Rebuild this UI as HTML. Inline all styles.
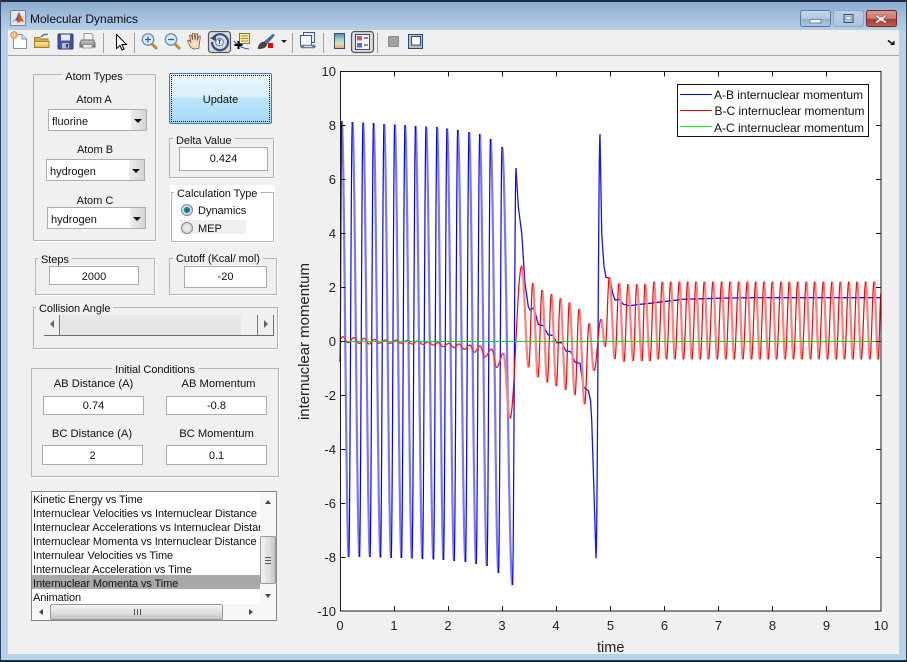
<!DOCTYPE html>
<html><head><meta charset="utf-8"><style>
html,body{margin:0;padding:0;background:#fff}
#w{position:relative;width:907px;height:662px;overflow:hidden;background:linear-gradient(#87a8cc 0,#a6c1de 18px,#b9d1ea 34px,#b9d1ea 100%);font:11px/14px "Liberation Sans",sans-serif;color:#111}
#w div{position:absolute;box-sizing:border-box}
.p{border:1px solid #b4b4b4;box-shadow:1px 1px 0 #fff}
.t{background:#f0f0f0;padding:0 3px;white-space:nowrap;line-height:14px;margin-top:1px;letter-spacing:-.05px}
.c{white-space:nowrap;line-height:14px;transform:translateX(-50%);margin-top:1px}
.i{background:#fff;border:1px solid #ababab;text-align:center;white-space:nowrap}
.s{background:#fff;border:1px solid #acacac;padding-left:3px;white-space:nowrap;line-height:25px}
.s i{position:absolute;right:0;top:0;bottom:0;width:15px;background:linear-gradient(90deg,#ececec,#d4d4d4)}
.s i:after{content:"";position:absolute;left:3px;top:9px;border:4px solid transparent;border-top:4px solid #111;border-bottom:0}
.li{left:1px;width:227px;height:14px;line-height:14px;white-space:nowrap;overflow:hidden;letter-spacing:-.1px}
</style></head><body><div id="w">
<div style="left:0;top:0;width:907px;height:2px;background:#1c2f45"></div>
<div style="left:0;top:0;width:1px;height:662px;background:#2c4460"></div>
<div style="left:906px;top:0;width:1px;height:662px;background:#2c4460"></div>
<div style="left:0;top:660px;width:907px;height:2px;background:#10303c"></div>
<div style="left:8px;top:30px;width:891px;height:25px;background:#efefef"></div>
<div style="left:8px;top:55px;width:891px;height:1px;background:#a5a5a5"></div>
<div style="left:8px;top:56px;width:891px;height:598px;background:#f0f0f0"></div>

<!-- title bar -->
<svg style="position:absolute;left:0;top:0" width="907" height="56" viewBox="0 0 907 56">
<defs>
<linearGradient id="b1" x1="0" y1="0" x2="0" y2="1"><stop offset="0" stop-color="#c8d9ec"/><stop offset=".5" stop-color="#b0c7e0"/><stop offset=".55" stop-color="#93b1d1"/><stop offset="1" stop-color="#adc9e4"/></linearGradient>
<linearGradient id="b3" x1="0" y1="0" x2="0" y2="1"><stop offset="0" stop-color="#bcd0e6"/><stop offset="1" stop-color="#aac5e1"/></linearGradient>
<linearGradient id="b2" x1="0" y1="0" x2="0" y2="1"><stop offset="0" stop-color="#d9988a"/><stop offset=".5" stop-color="#c87c6f"/><stop offset=".55" stop-color="#ad3a2c"/><stop offset="1" stop-color="#c2604e"/></linearGradient>
<linearGradient id="cb" x1="0" y1="0" x2="0" y2="1"><stop offset="0" stop-color="#5a78c8"/><stop offset=".35" stop-color="#8fd0c8"/><stop offset=".65" stop-color="#e8e0a0"/><stop offset="1" stop-color="#e8a090"/></linearGradient>
<linearGradient id="fd" x1="0" y1="0" x2="0" y2="1"><stop offset="0" stop-color="#fdf0b0"/><stop offset="1" stop-color="#e8b840"/></linearGradient>
<linearGradient id="pr" x1="0" y1="0" x2="0" y2="1"><stop offset="0" stop-color="#d0d0d0"/><stop offset="1" stop-color="#7a7a7a"/></linearGradient>
</defs>
<rect x="10.500" y="10.500" width="15" height="15" fill="#dfe6ee" stroke="#7a8796"/>
<path d="M12 22l4-3 3-7 2 4 3 6-3-1-3 2-2-3z" fill="#e0561a"/><path d="M12 22l4-3 3-7-1 8-2 0z" fill="#35679f"/>
<rect x="800.500" y="10.500" width="30" height="16" rx="2" fill="url(#b1)" stroke="#5d7a9d"/>
<rect x="810" y="19.500" width="11" height="3.500" fill="#f4f4f4" stroke="#5a6a7d" stroke-width=".7"/>
<rect x="833.500" y="10.500" width="30" height="16" rx="2" fill="url(#b3)" stroke="#8aa6c4"/>
<rect x="844" y="14.500" width="9" height="8" fill="none" stroke="#3e4c5d" stroke-width="1"/><rect x="846" y="16.500" width="5" height="3" fill="#eee" stroke="#777" stroke-width=".5"/>
<rect x="866.500" y="10.500" width="30" height="16" rx="2" fill="url(#b2)" stroke="#6d2b2d"/>
<path d="M877 14.500l3 2.500 2 0 3-2.500 2 1.500-3.500 3 3.500 3-2 1.500-3-2.500-2 0-3 2.500-2-1.500 3.500-3-3.500-3z" fill="#f2f2f2" stroke="#7d4040" stroke-width=".6"/>
<!-- toolbar -->
<path d="M13.500 34.500h8.500l4.500 4.500v9.500h-13z" fill="#fbfdff" stroke="#7f93a8"/><path d="M22 34.500v4.500h4.500" fill="#dfe8f0" stroke="#7f93a8"/><circle cx="14" cy="35" r="3.200" fill="#f9c8a0" stroke="#ec7a3a" stroke-width="1"/>
<path d="M34.500 47.500v-10h5l1.500 1.500h7v8.500z" fill="#d9b040" stroke="#a0822c"/><path d="M34.500 47.500v-6h14.500v6z" fill="url(#fd)" stroke="#a0822c"/><path d="M41 37q3-3.500 7-2.500" fill="none" stroke="#4a7298" stroke-width="1.400"/>
<rect x="58" y="34" width="15" height="15" rx="1" fill="#4451a6" stroke="#2f3778"/><rect x="61" y="34.500" width="9" height="6" fill="#e8ecf5"/><rect x="62" y="43" width="7" height="5.500" fill="#b8bcc8"/><rect x="66" y="44" width="2" height="3.500" fill="#333a70"/>
<path d="M84 40v-6.500h7l2 2v4.500z" fill="#f2f2f2" stroke="#9a9a9a"/><path d="M81.500 40h12l1.500 3v4h-15v-4z" fill="url(#pr)" stroke="#666"/><rect x="83" y="44.500" width="9" height="3.500" fill="#eaeaea" stroke="#777" stroke-width=".6"/>
<path d="M103.500 33v20M134.500 33v20M292.500 33v20M323.500 33v20M377.500 33v20" stroke="#a0a0a0"/>
<path d="M116.500 34.500v14l3.500-3 2 4.500 2-1-2-4.500h4.500z" fill="#fff" stroke="#000"/>
<path d="M152 44l5 5" stroke="#c98a30" stroke-width="3"/><circle cx="148" cy="39.500" r="5.700" fill="#d8ecf8" stroke="#6f93b4" stroke-width="1.400"/><path d="M145 39.500h6M148 36.500v6" stroke="#2c5fa0" stroke-width="1.300"/>
<path d="M175 44l5 5" stroke="#c98a30" stroke-width="3"/><circle cx="171" cy="39.500" r="5.700" fill="#d8ecf8" stroke="#6f93b4" stroke-width="1.400"/><path d="M168 39.500h6" stroke="#2c5fa0" stroke-width="1.300"/>
<path d="M195 49c-3 0-5-2-6-5l-1.500-3.500 1.500-.5 2 2.500-1.500-7 1.700-.5 1.700 5-.5-6.500 1.800-.2 1 6.500.7-6 1.700.2-.4 6.500 1.700-4.500 1.500.5-1 7-.7 5z" fill="#f8dcc0" stroke="#77583f" stroke-width=".8"/>
<rect x="208.500" y="31.500" width="22" height="21" rx="3" fill="#dadada" stroke="#555" stroke-width="1.200"/>
<path d="M213.500 37.500a8 8 0 1 1-1.500 4.500" fill="none" stroke="#324f82" stroke-width="2.200"/><path d="M210 38l6-2.500 0 6z" fill="#324f82"/><circle cx="219.500" cy="42" r="3.800" fill="#e8edf5" stroke="#5d7aa8" stroke-width="1"/><path d="M218 40h3M219.500 40v4" stroke="#324f82"/>
<rect x="239.500" y="33.500" width="10" height="10" fill="#f4e8a0" stroke="#8a7a30"/><path d="M241 36h7M241 38.500h7M241 41h7" stroke="#8a7a50" stroke-width=".7"/>
<path d="M234 41q5 7 15 8" fill="none" stroke="#2a3ad0"/><path d="M238.500 41v8M234.500 45h8" stroke="#000" stroke-width="2"/>
<path d="M264 42l9-8 1.500 1.500-8 9z" fill="#4d6fa8" stroke="#26406a" stroke-width=".5"/><path d="M258 48.500c.5-3.500 2.500-6.500 6-6.500l2.500 2.500c0 3-4 4.500-8.500 4z" fill="#444" stroke="#222" stroke-width=".5"/><rect x="268" y="43" width="5" height="5" fill="#e00"/>
<path d="M281 40h6l-3 3z" fill="#222"/>
<rect x="303.500" y="32.500" width="11" height="10" fill="#e8eef5" stroke="#3e5a7c"/><rect x="300.500" y="35.500" width="11" height="10" fill="#f4f7fb" stroke="#3e5a7c"/><path d="M302 46.500h5M309 46.500h5" stroke="#6e7f96" stroke-width="3.400" stroke-linecap="round"/><path d="M304 46.500h8" stroke="#e4e8f0" stroke-width="1"/>
<rect x="334.500" y="33.500" width="10" height="15" fill="url(#cb)" stroke="#35507e"/>
<rect x="351.500" y="31.500" width="22" height="21" rx="3" fill="#dadada" stroke="#555" stroke-width="1.200"/><rect x="355.500" y="34.500" width="14" height="15" fill="#f8f8fc" stroke="#35507e"/><rect x="357" y="36" width="5" height="4.500" fill="#e05560"/><rect x="357" y="43" width="5" height="4.500" fill="#5a6ad8"/><path d="M364 38h4M364 45h4" stroke="#222"/>
<rect x="388.500" y="36.500" width="10" height="10" rx="1" fill="#a2a2a2" stroke="#8c8c8c"/>
<rect x="408.500" y="34.500" width="14" height="14" fill="#b4c0d0" stroke="#2c4a78"/><rect x="411.500" y="36.500" width="9" height="8.500" fill="#fff" stroke="#2c4a78"/>
<path d="M888 40.500l3.500 2.500" stroke="#000" stroke-width="1.500"/><path d="M890 45h4.500v-4.500z" fill="#000"/>
</svg>
<div style="left:30px;top:12px;font-size:12px;color:#0c0c14;white-space:nowrap">Molecular Dynamics</div>

<!-- Atom types -->
<div class="p" style="left:33px;top:74px;width:123px;height:167px"></div>
<div class="c t" style="left:94px;top:69px">Atom Types</div>
<div class="c" style="left:94px;top:92px">Atom A</div>
<div class="s" style="left:48px;top:109px;width:99px;height:22px">fluorine<i></i></div>
<div class="c" style="left:95px;top:142px">Atom B</div>
<div class="s" style="left:46px;top:159px;width:99px;height:22px">hydrogen<i></i></div>
<div class="c" style="left:95px;top:193px">Atom C</div>
<div class="s" style="left:47px;top:207px;width:99px;height:22px">hydrogen<i></i></div>

<!-- Update -->
<div style="left:169px;top:73px;width:103px;height:51px;border:1px solid #3c7fb1;border-radius:2px;background:linear-gradient(#eaf6fd 0,#d9f0fc 47%,#bee6fd 48%,#a7d9f5 100%)"></div>
<div style="left:171px;top:75px;width:99px;height:47px;border:1px dotted #000;text-align:center;line-height:49px">Update</div>

<!-- Delta -->
<div class="p" style="left:169px;top:138px;width:105px;height:40px"></div>
<div class="t" style="left:173px;top:133px">Delta Value</div>
<div class="i" style="left:179px;top:147px;width:89px;height:24px;line-height:22px">0.424</div>

<!-- Calc type -->
<div style="left:170px;top:185px;width:105px;height:58px;background:#fff"></div>
<div class="p" style="left:171px;top:192px;width:103px;height:50px;box-shadow:none"></div>
<div class="t" style="left:174px;top:186px;background:#fff">Calculation Type</div>
<div style="left:180px;top:220px;width:66px;height:14px;background:#f0f0f0"></div>
<div style="left:181px;top:204px;width:12px;height:12px;border-radius:50%;border:1px solid #7a8a9a;background:radial-gradient(circle,#0b5f94 0,#2a86b8 40%,#dfe4e9 48%,#b8bcc2 100%)"></div>
<div style="left:181px;top:222px;width:12px;height:12px;border-radius:50%;border:1px solid #8a8a8a;background:radial-gradient(circle,#f4f4f4 0,#dcdcdc 60%,#c4c4c4 100%)"></div>
<div style="left:198px;top:204px;white-space:nowrap">Dynamics</div>
<div style="left:198px;top:222px">MEP</div>

<!-- Steps / cutoff -->
<div class="p" style="left:35px;top:258px;width:120px;height:37px"></div>
<div class="t" style="left:38px;top:252px">Steps</div>
<div class="i" style="left:49px;top:266px;width:90px;height:19px;line-height:20px">2000</div>
<div class="p" style="left:169px;top:258px;width:108px;height:37px"></div>
<div class="t" style="left:173px;top:251px">Cutoff (Kcal/ mol)</div>
<div class="i" style="left:184px;top:266px;width:83px;height:22px;line-height:20px">-20</div>

<!-- collision -->
<div class="p" style="left:33px;top:307px;width:245px;height:42px"></div>
<div class="t" style="left:36px;top:301px">Collision Angle</div>
<div style="left:44px;top:315px;width:230px;height:21px;background:#f0f0f0;border-bottom:1px solid #6a6a6a"></div>
<div style="left:60px;top:315px;width:181px;height:20px;background:#e6e6e6"></div>
<div style="left:44px;top:315px;width:16px;height:21px;border-right:1px solid #777;border-bottom:1px solid #6a6a6a;background:#efefef"></div>
<div style="left:241px;top:315px;width:17px;height:21px;border-right:1px solid #777;border-bottom:1px solid #6a6a6a;background:#f0f0f0"></div>
<div style="left:258px;top:315px;width:16px;height:21px;border-right:1px solid #777;border-bottom:1px solid #6a6a6a;background:#efefef"></div>
<div style="left:50px;top:320px;width:0;height:0;border:4px solid transparent;border-right:4px solid #666;border-left:0"></div>
<div style="left:264px;top:320px;width:0;height:0;border:4px solid transparent;border-left:4px solid #666;border-right:0"></div>

<!-- Initial -->
<div class="p" style="left:31px;top:368px;width:248px;height:109px"></div>
<div class="c t" style="left:155px;top:362px">Initial Conditions</div>
<div class="c" style="left:93.500px;top:376px;font-size:11.200px">AB Distance (A)</div>
<div class="c" style="left:218.500px;top:376px;font-size:11.200px">AB Momentum</div>
<div class="i" style="left:43px;top:396px;width:101px;height:19px;line-height:19px">0.74</div>
<div class="i" style="left:166px;top:396px;width:101px;height:19px;line-height:19px">-0.8</div>
<div class="c" style="left:92px;top:426px;font-size:11.200px">BC Distance (A)</div>
<div class="c" style="left:216.500px;top:426px;font-size:11.200px">BC Momentum</div>
<div class="i" style="left:42px;top:445px;width:101px;height:20px;line-height:20px">2</div>
<div class="i" style="left:166px;top:445px;width:101px;height:20px;line-height:20px">0.1</div>

<!-- list -->
<div style="left:31px;top:491px;width:246px;height:130px;background:#fff;border:1px solid #7f8890">
<div style="left:0;top:83px;width:228px;height:14px;background:#a9a9a9"></div>
<div class="li" style="top:1px">Kinetic Energy vs Time</div>
<div class="li" style="top:15px">Internuclear Velocities vs Internuclear Distance</div>
<div class="li" style="top:29px">Internuclear Accelerations vs Internuclear Distance</div>
<div class="li" style="top:43px">Internuclear Momenta vs Internuclear Distance</div>
<div class="li" style="top:57px">Internulear Velocities vs Time</div>
<div class="li" style="top:71px">Internuclear Acceleration vs Time</div>
<div class="li" style="top:85px">Internuclear Momenta vs Time</div>
<div class="li" style="top:99px">Animation</div>
<div style="left:228px;top:0;width:16px;height:112px;background:#f6f6f6"></div>
<div style="left:0;top:112px;width:244px;height:16px;background:#f6f6f6"></div>
<div style="left:228px;top:44px;width:16px;height:48px;border:1px solid #9a9a9a;border-radius:2px;background:linear-gradient(90deg,#f4f4f4,#dcdcdc 60%,#c4c4c4)"></div>
<div style="left:233px;top:65px;width:6px;height:7px;border-top:1px solid #555;border-bottom:1px solid #555"></div>
<div style="left:233px;top:68px;width:6px;height:1px;background:#555"></div>
<div style="left:233px;top:8px;width:0;height:0;border:3px solid transparent;border-bottom:4px solid #444;border-top:0"></div>
<div style="left:233px;top:102px;width:0;height:0;border:3px solid transparent;border-top:4px solid #444;border-bottom:0"></div>
<div style="left:18px;top:112px;width:173px;height:16px;border:1px solid #9a9a9a;border-radius:2px;background:linear-gradient(#f4f4f4,#dcdcdc 60%,#c4c4c4)"></div>
<div style="left:102px;top:117px;width:7px;height:6px;border-left:1px solid #555;border-right:1px solid #555"></div>
<div style="left:105px;top:117px;width:1px;height:6px;background:#555"></div>
<div style="left:7px;top:117px;width:0;height:0;border:3px solid transparent;border-right:4px solid #444;border-left:0"></div>
<div style="left:217px;top:117px;width:0;height:0;border:3px solid transparent;border-left:4px solid #444;border-right:0"></div>
</div>

<!-- plot -->
<svg style="position:absolute;left:290px;top:56px" width="609" height="598" viewBox="290 56 609 598" font-family="'Liberation Sans',sans-serif">
<rect x="340" y="71.500" width="541" height="539.500" fill="#fff"/>
<path id="bf" fill="none" stroke="#7878ff" stroke-width="2.200"/>
<path id="br" fill="none" stroke="#0000ff" stroke-width="1.200"/>
<path id="bt" fill="none" stroke="#1414ff" stroke-width="1.300"/>
<path id="rf" fill="none" stroke="#ff8080" stroke-width="2.200"/>
<path id="rr" fill="none" stroke="#ff0000" stroke-width="1.200"/>
<path id="rs" fill="none" stroke="#ff2020" stroke-width="1.300"/>
<path d="M340 341.500H881" stroke="#0fdc0f" stroke-width="1"/>
<rect x="340.500" y="71.500" width="540.500" height="539.500" fill="none" stroke="#1a1a1a"/>
<path d="M394.500 71.500v5M448.500 71.500v5M502.500 71.500v5M556.500 71.500v5M610.500 71.500v5M664.500 71.500v5M718.500 71.500v5M772.500 71.500v5M826.500 71.500v5M394.500 611v-5M448.500 611v-5M502.500 611v-5M556.500 611v-5M610.500 611v-5M664.500 611v-5M718.500 611v-5M772.500 611v-5M826.500 611v-5M340.500 125.500h5M340.500 179.500h5M340.500 233.500h5M340.500 287.500h5M340.500 341.500h5M340.500 395.500h5M340.500 449.500h5M340.500 503.500h5M340.500 557.500h5M881 125.500h-5M881 179.500h-5M881 233.500h-5M881 287.500h-5M881 341.500h-5M881 395.500h-5M881 449.500h-5M881 503.500h-5M881 557.500h-5" stroke="#1a1a1a" fill="none"/>
<g font-size="13" fill="#222" text-anchor="end">
<text x="336" y="76">10</text><text x="336" y="130">8</text><text x="336" y="184">6</text><text x="336" y="238">4</text><text x="336" y="292">2</text><text x="336" y="346">0</text><text x="336" y="400">-2</text><text x="336" y="454">-4</text><text x="336" y="508">-6</text><text x="336" y="562">-8</text><text x="336" y="616">-10</text>
</g>
<g font-size="13" fill="#222" text-anchor="middle">
<text x="340" y="630">0</text><text x="394" y="630">1</text><text x="448" y="630">2</text><text x="502" y="630">3</text><text x="556" y="630">4</text><text x="610.500" y="630">5</text><text x="664.500" y="630">6</text><text x="718.500" y="630">7</text><text x="772.500" y="630">8</text><text x="826.500" y="630">9</text><text x="881" y="630">10</text>
</g>
<text x="597" y="652" font-size="14.500" fill="#222">time</text>
<text transform="translate(309 420) rotate(-90)" font-size="15" fill="#222" textLength="157">internuclear momentum</text>
<rect x="677.500" y="84.500" width="191" height="52" fill="#fff" stroke="#111"/>
<path d="M680 94.500h32" stroke="#0000ff"/><path d="M680 110.500h32" stroke="#ff0000"/><path d="M680 126.500h32" stroke="#00ff00"/>
<g font-size="12" fill="#111">
<text x="714" y="99" textLength="149">A-B internuclear momentum</text>
<text x="714.500" y="115" textLength="150">B-C internuclear momentum</text>
<text x="714" y="132" textLength="150">A-C internuclear momentum</text>
</g>
</svg>
<script>
function seg(a,b){var s='',n=Math.max(4,Math.ceil(Math.abs(b[0]-a[0])*3));for(var k=1;k<=n;k++){var t=k/n,u=(1-Math.cos(Math.PI*t))/2;s+='L'+(a[0]+(b[0]-a[0])*t).toFixed(2)+' '+(a[1]+(b[1]-a[1])*u).toFixed(2);}return s;}
function set(id,d){document.getElementById(id).setAttribute('d',d);}
function split(e,up,down){var U='',D='';for(var i=1;i<e.length;i++){var a=e[i-1],b=e[i],s='M'+a[0]+' '+a[1]+seg(a,b);if(b[1]<a[1])U+=s;else D+=s;}set(up,U);set(down,D);}
var P=[[341.7,121],[352.3,122],[363,122.5],[373.5,123],[384,124],[394.7,124.5],[405,125],[415.5,126],[426,126.5],[437,127],[447,128.5],[457.7,130],[469,132],[479.7,134],[490.5,139],[502,147],[516,168]];
var T=[557,557,557,557.5,558,558,558.5,559,559.5,560,561,562,564,566,573,585];
var B=[[340,362],P[0]];for(var i=1;i<P.length;i++){B.push([P[i][0]-3.5,T[i-1]]);B.push(P[i]);}
split(B,'br','bf');
var d='M516 168';
[[518.3,206.7],[521.7,233],[525,283],[528.3,306.7],[530,310],[533.3,308],[535.5,314],[538.3,324.3],[543.3,325.7],[548.3,335],[552.7,335.3],[556.7,342.7],[561.7,342.7],[566,351],[570.7,351.7],[575,362.3],[580,363.3],[583.3,386.7],[588.3,390.7],[590.5,400],[591.7,420],[593.3,470],[596,558.3]].forEach(function(p){d+='L'+p[0]+' '+p[1]});
d+=seg([596,558.3],[600,134]);
[[601.7,233],[604,266.7],[606,277.3],[610,278.3],[612.7,293.3],[615,300],[619.3,299.3],[623.3,304.3],[630,305.7],[640,304.3],[650,303.3],[683,299.3],[716.7,298.3],[750,297.7],[881,297.7]].forEach(function(p){d+='L'+p[0]+' '+p[1]});
set('bt',d);
var E0=[[340,339],[342.7,336.7],[348,342.7],[354,337.7],[359,343.5],[364,338.3],[369,344],[374.3,339.3],[379,343.3],[385.3,340],[390,343.5],[396,340],[401,343.3],[406.7,340.7],[412,344],[417.7,341],[423,344.5],[428,341.7],[433,345],[438,342.7],[443,346.7],[449,343.3],[454,347.7],[459,344],[464.3,349.3],[470,345],[474.3,352.3],[480,346],[485,357],[491.7,349],[496.7,367.5],[503.3,353.3]];
var s0='M340 339';for(var i=1;i<E0.length;i++)s0+=seg(E0[i-1],E0[i]);set('rs',s0);
var E=[[503.3,353.3],[510,418.3],[521.7,266],[528.7,367.3],[532.7,283.3],[538,377.3],[542,290],[547.3,382.3],[551.3,294],[556.3,386],[560.3,298.3],[565.7,390],[569.3,302.3],[575,395],[579,309],[584.7,404.3],[589,323.3],[594,370.7],[601,319.3],[605.3,346.7],[609.3,277.3],[615,359],[619,283.3],[624,361.7],[628,284.3],[633.3,361],[636.7,284.3],[642,361],[645,284],[650,361]];
[654,662.3,670.7,679.3,687.7,696,704.3,713,721.7,730,738.7,747.3,755.7,764,772.3,781,789.3,797.7,806.3,814.7,823.3,832,840.3,848.7,857,865.7,874].forEach(function(x){E.push([x,281.7]);E.push([x+4.2,359.3]);});
E.push([881,293]);
split(E,'rr','rf');
</script>
</div></body></html>
